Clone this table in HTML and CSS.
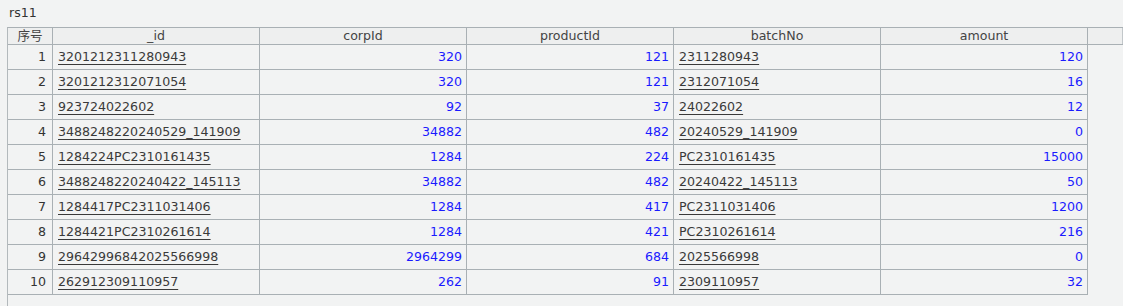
FILE: index.html
```html
<!DOCTYPE html>
<html>
<head>
<meta charset="utf-8">
<link rel="stylesheet" href="styles.css">
</head>
<body>
<div class="title">rs11</div>
<div class="pane">
  <div class="row head">
    <div class="cell c0">序号</div>
    <div class="cell cw">_id</div>
    <div class="cell cw">corpId</div>
    <div class="cell cw">productId</div>
    <div class="cell cw">batchNo</div>
    <div class="cell cw">amount</div>
    <div class="cell filler"></div>
  </div>
  <div class="row"><div class="cell c0 num">1</div><div class="cell cw txt"><span class="link">3201212311280943</span></div><div class="cell cw val">320</div><div class="cell cw val">121</div><div class="cell cw txt"><span class="link">2311280943</span></div><div class="cell cw val">120</div></div>
  <div class="row"><div class="cell c0 num">2</div><div class="cell cw txt"><span class="link">3201212312071054</span></div><div class="cell cw val">320</div><div class="cell cw val">121</div><div class="cell cw txt"><span class="link">2312071054</span></div><div class="cell cw val">16</div></div>
  <div class="row"><div class="cell c0 num">3</div><div class="cell cw txt"><span class="link">923724022602</span></div><div class="cell cw val">92</div><div class="cell cw val">37</div><div class="cell cw txt"><span class="link">24022602</span></div><div class="cell cw val">12</div></div>
  <div class="row"><div class="cell c0 num">4</div><div class="cell cw txt"><span class="link">3488248220240529_141909</span></div><div class="cell cw val">34882</div><div class="cell cw val">482</div><div class="cell cw txt"><span class="link">20240529_141909</span></div><div class="cell cw val">0</div></div>
  <div class="row"><div class="cell c0 num">5</div><div class="cell cw txt"><span class="link">1284224PC2310161435</span></div><div class="cell cw val">1284</div><div class="cell cw val">224</div><div class="cell cw txt"><span class="link">PC2310161435</span></div><div class="cell cw val">15000</div></div>
  <div class="row"><div class="cell c0 num">6</div><div class="cell cw txt"><span class="link">3488248220240422_145113</span></div><div class="cell cw val">34882</div><div class="cell cw val">482</div><div class="cell cw txt"><span class="link">20240422_145113</span></div><div class="cell cw val">50</div></div>
  <div class="row"><div class="cell c0 num">7</div><div class="cell cw txt"><span class="link">1284417PC2311031406</span></div><div class="cell cw val">1284</div><div class="cell cw val">417</div><div class="cell cw txt"><span class="link">PC2311031406</span></div><div class="cell cw val">1200</div></div>
  <div class="row"><div class="cell c0 num">8</div><div class="cell cw txt"><span class="link">1284421PC2310261614</span></div><div class="cell cw val">1284</div><div class="cell cw val">421</div><div class="cell cw txt"><span class="link">PC2310261614</span></div><div class="cell cw val">216</div></div>
  <div class="row"><div class="cell c0 num">9</div><div class="cell cw txt"><span class="link">29642996842025566998</span></div><div class="cell cw val">2964299</div><div class="cell cw val">684</div><div class="cell cw txt"><span class="link">2025566998</span></div><div class="cell cw val">0</div></div>
  <div class="row"><div class="cell c0 num">10</div><div class="cell cw txt"><span class="link">262912309110957</span></div><div class="cell cw val">262</div><div class="cell cw val">91</div><div class="cell cw txt"><span class="link">2309110957</span></div><div class="cell cw val">32</div></div>
</div>
</body>
</html>
```

FILE: styles.css
```css
html, body {
  margin: 0;
  padding: 0;
  background: #f2f3f3;
  width: 1123px;
  height: 306px;
  overflow: hidden;
  font-family: "DejaVu Sans", "Noto Sans CJK SC", sans-serif;
  font-size: 12.6px;
  color: #333;
}
.title {
  height: 27px;
  line-height: 26px;
  padding-left: 9px;
  color: #333;
}
.pane {
  margin-left: 7px;
  border-left: 1px solid #b3b9bc;
  border-top: 1px solid #a9b0b4;
  height: 279px;
  box-sizing: border-box;
}
.row {
  display: flex;
  height: 25px;
  box-sizing: border-box;
  width: 1080px;
}
.row.head {
  width: auto;
  height: 17px;
  background: #eeefef;
  border-bottom: 1px solid #a9b0b4;
}
.cell {
  box-sizing: border-box;
  border-right: 1px solid #a9b0b4;
  border-bottom: 1px solid #a9b0b4;
  white-space: nowrap;
  overflow: hidden;
  line-height: 24px;
}
.head .cell {
  border-bottom: none;
  line-height: 16px;
  text-align: center;
  color: #444;
}
.c0 { width: 45px; flex: none; }
.cw { width: 207px; flex: none; }
.filler { flex: 1; border-right: 1px solid #c2c7ca; }
.num {
  text-align: right;
  padding-right: 6px;
  color: #333;
}
.txt {
  padding-left: 5px;
}
.link {
  color: #3a3a3a;
  text-decoration: underline;
  text-decoration-color: #3a3a3a;
  text-underline-offset: 3px;
  text-decoration-thickness: 1px;
}
.val {
  text-align: right;
  padding-right: 4px;
  color: #1a1aff;
}
```
